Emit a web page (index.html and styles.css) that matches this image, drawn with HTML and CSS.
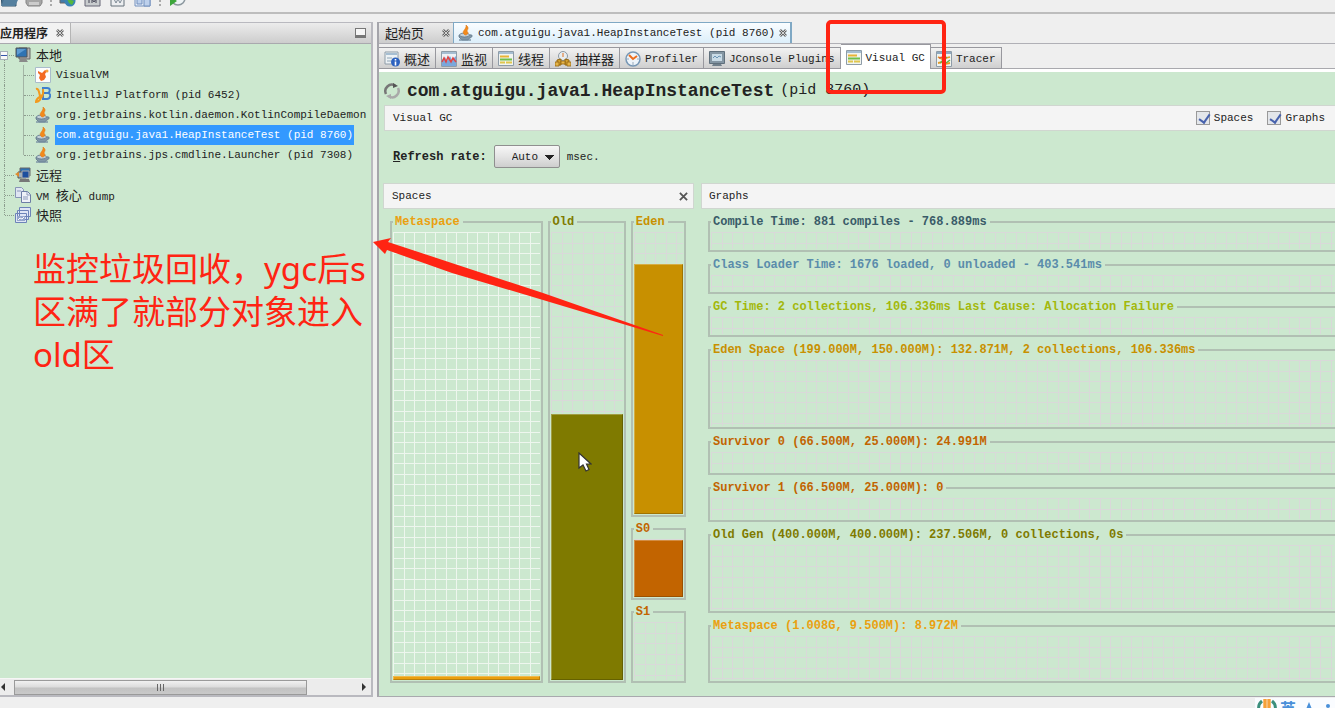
FILE: index.html
```html
<!DOCTYPE html>
<html lang="zh-CN">
<head>
<meta charset="utf-8">
<title>VisualVM</title>
<link rel="stylesheet" href="styles.css">
</head>
<body>
<svg class="sprite" aria-hidden="true">
  <symbol id="i-java" viewBox="0 0 16 16">
    <path d="M1 10h10.500c3-1 4 2 0 3.200L10 15H4l-3-3z" fill="#8298a8" stroke="#536c80" stroke-width=".7"/>
    <ellipse cx="6.500" cy="10" rx="5" ry="2" fill="#c3d0d9" stroke="#536c80" stroke-width=".7"/>
    <path d="M7 10C2 6 9 5 8 0c5 4-1 5 2 7.500C10 9 9 10 7 10z" fill="#f28a1c" stroke="#e07a18" stroke-width=".6"/>
    <path d="M1 15h12" stroke="#7890a2" stroke-width="1.400"/>
  </symbol>
  <symbol id="i-pc" viewBox="0 0 16 16">
    <path d="M4 1h11v11H4z" fill="#b4b4b4" stroke="#666"/>
    <path d="M1 1h11v9H1z" fill="#2f73b3" stroke="#555"/>
    <path d="M2 2h9L2 8z" fill="#5d9bd2"/>
    <path d="M5 12h6l2 3H4z" fill="#8a8a8a"/>
  </symbol>
  <symbol id="i-vvm" viewBox="0 0 16 16">
    <path d="M.5.5h15v15H.5z" fill="#fdfdfd" stroke="#a9bccb"/>
    <path d="M3 4l4 2 3-3 2 1-2 3 1 3-2 3-3 1-2-3 1-3-2-2z" fill="#f36a22"/>
    <circle cx="12" cy="4" r="1.500" fill="#f7a23b"/>
  </symbol>
  <symbol id="i-idea" viewBox="0 0 16 16">
    <path d="M8 1h4c4 0 3 4 1 5 4 1 2 6-1 6H8V1zM8 6h5" fill="none" stroke="#3f7fd0" stroke-width="2"/>
    <path d="M1 2c3-1 3 4 4 7 1 4 4-1 3-7M7 8c-1 4-3 7-6 7 0-4 4-5 6-7" fill="none" stroke="#f39a1d" stroke-width="2"/>
  </symbol>
  <symbol id="i-remote" viewBox="0 0 16 16">
    <path d="M5 1h10v8H5z" fill="#2f73b3" stroke="#666"/>
    <path d="M3 5h8v6H3z" fill="#9fb1bd" stroke="#555"/>
    <path d="M7 4h7v7H7z" fill="#1c4f9e" stroke="#aaa"/>
    <path d="M5 12h9l1 3H4z" fill="#777"/>
    <path d="M0 7l4-2v5z" fill="#e28a2b"/>
  </symbol>
  <symbol id="i-dump" viewBox="0 0 16 16">
    <path d="M.5.5h6l2 2v8h-8z" fill="#dfe5f2" stroke="#8795b6"/>
    <path d="M6.500 4.500h6l3 3v8h-9z" fill="#eef1f8" stroke="#6d7ea5"/>
    <path d="M12 5v3h3M8 10h5M8 12h5M2 4h4" fill="none" stroke="#8d9abb"/>
  </symbol>
  <symbol id="i-snap" viewBox="0 0 16 16">
    <path d="M4.500.5h11v9h-11zM2.500 3.500h11v9h-11zM.5 6.500h11v9H.5z" fill="#dfe6f5" stroke="#6c83b8"/>
    <path d="M2 9h8v5H2z" fill="#94a6cd"/>
    <path d="M3 13l2-2 2 1 2-2" fill="none" stroke="#fff"/>
  </symbol>
  <symbol id="i-info" viewBox="0 0 16 16">
    <path d="M1 1h13v12H1z" fill="#edf2f5" stroke="#8e9ca8"/>
    <path d="M2 2h11v2H2z" fill="#a6bed2"/>
    <path d="M3 7h5M3 10h4" stroke="#8fa4b5"/>
    <circle cx="11.500" cy="11" r="4.500" fill="#2d62bf"/>
    <path d="M11.500 8v1.500M11.500 10.500v4" stroke="#fff" stroke-width="1.600"/>
  </symbol>
  <symbol id="i-mon" viewBox="0 0 16 16">
    <path d="M.5.5h15v15H.5z" fill="#eef2f6" stroke="#8e9ca8"/>
    <path d="M1 1h14v2H1z" fill="#a6bed2"/>
    <path d="M1 15V9l3-3 2 4 3-5 2 4 4-4v10z" fill="#7aa7dc"/>
    <path d="M1 11l2-4 2 4 2-5 3 5 2-4 3 4" fill="none" stroke="#e14545" stroke-width="1.500"/>
  </symbol>
  <symbol id="i-thr" viewBox="0 0 16 16">
    <path d="M.5.5h15v14H.5z" fill="#f1f4f0" stroke="#8e9ca8"/>
    <path d="M1 1h14v2H1z" fill="#a6bed2"/>
    <path d="M2 5.500h9" stroke="#e8b435" stroke-width="2"/>
    <path d="M2 8.500h12" stroke="#6fbf4b" stroke-width="2"/>
    <path d="M2 11.500h5m1 0h6" stroke="#e0c64c" stroke-width="2"/>
  </symbol>
  <symbol id="i-samp" viewBox="0 0 16 16">
    <circle cx="8" cy="5" r="4.500" fill="#e8edf0" stroke="#8c98a2"/>
    <path d="M8 2v4" stroke="#e07020"/>
    <path d="M2 14V9l4-1v6zM10 14V8l4 1v5z" fill="#d2a02f" stroke="#94660f"/>
    <path d="M0 11h4v4H0zM12 11h4v4h-4zM6 10h4v3H6z" fill="#e5b54a" stroke="#94660f" stroke-width=".8"/>
  </symbol>
  <symbol id="i-prof" viewBox="0 0 16 16">
    <circle cx="8" cy="8" r="7" fill="#edf4fa" stroke="#7797b5" stroke-width="1.500"/>
    <path d="M4 4l4 4 4-3" fill="none" stroke="#ed6d1d" stroke-width="2"/>
    <path d="M8 11v3M2 8h2M12 8h2" stroke="#9ab"/>
  </symbol>
  <symbol id="i-jcon" viewBox="0 0 16 16">
    <path d="M.5.5h15v12H.5z" fill="#8496a3" stroke="#60707c"/>
    <path d="M3 3h10v7H3z" fill="#c9dbe6"/>
    <path d="M4 7l2-2 2 2 2-2 2 1" fill="none" stroke="#6b95b5"/>
    <path d="M4 13h8l1 2H3z" fill="#71808b"/>
  </symbol>
  <symbol id="i-trace" viewBox="0 0 16 16">
    <path d="M.5.5h15v15H.5z" fill="#f1f4f0" stroke="#8e9ca8"/>
    <path d="M1 1h14v2H1z" fill="#8fa9c0"/>
    <path d="M2 6l4 2 3 5 5-1M2 12l5-1 3-4 4-1" fill="none" stroke="#e79a2b" stroke-width="1.800"/>
    <path d="M4 12l7-6M10 12l4-3" stroke="#62b04a" stroke-width="1.500"/>
    <path d="M3 7l4-1" stroke="#d85a3a" stroke-width="1.500"/>
  </symbol>
  <symbol id="i-x" viewBox="0 0 8 8">
    <path d="M1 1l6 6M7 1L1 7" stroke="#666" stroke-width="2.600"/>
    <path d="M1 1l6 6M7 1L1 7" stroke="#eee" stroke-width=".8"/>
  </symbol>
</svg>

<header class="toolbar">
  <button aria-label="打开"><svg viewBox="0 0 18 16"><path d="M1 4h6l2 2h7v9H2z" fill="#4a7291" stroke="#34566f"/><path d="M4 9h14l-3 6H1z" fill="#55809f"/></svg></button>
  <button aria-label="保存" class="gap-m"><svg viewBox="0 0 18 16"><path d="M1 6h16v6l-2 3H3l-2-3z" fill="#a6a6a6" stroke="#858585"/><path d="M4 11h10v3H4z" fill="#ccc"/></svg></button>
  <i class="dots"></i>
  <button aria-label="远程"><svg viewBox="0 0 18 16"><path d="M1 4h9v8H1z" fill="#447ba8" stroke="#666"/><circle cx="11" cy="10" r="5.500" fill="#3984b5"/><path d="M8 8l3-2 1 3 3 1-2 4-3-2z" fill="#55b83d"/></svg></button>
  <button aria-label="JMX" class="gap-m"><svg viewBox="0 0 18 16"><path d="M1 4h15v11H1z" fill="#c8ccce" stroke="#667"/><path d="M3 8h2v4m3 0V8l2 3 2-3v4" fill="none" stroke="#445"/></svg></button>
  <button aria-label="堆" class="gap-m"><svg viewBox="0 0 18 16"><path d="M2 2h13v13H2z" fill="#eceef0" stroke="#67727d"/><path d="M5 8l2 4 2-4 2 4 2-4" fill="none" stroke="#7d8995"/></svg></button>
  <button aria-label="快照" class="gap-m"><svg viewBox="0 0 18 16"><path d="M1 1h15v14H1z" fill="#e6edf8" stroke="#7390bd"/><path d="M3 8h5v5H3zM10 8h6v7h-6z" fill="#bdd0ec" stroke="#7390bd"/></svg></button>
  <i class="dots"></i>
  <button aria-label="性能"><svg viewBox="0 0 18 16"><circle cx="10" cy="7" r="7" fill="#eef3f5" stroke="#8b979e" stroke-width="1.500"/><path d="M2 5l7 5-7 5z" fill="#3da63b"/><path d="M9 9l4-4" stroke="#777"/></svg></button>
</header>

<main class="work">
  <aside class="side">
    <div class="side-tabs">
      <h2>应用程序</h2>
      <button class="x" aria-label="关闭"><svg><use href="#i-x"/></svg></button>
      <button class="mini" aria-label="最小化"></button>
    </div>
    <ul class="tree">
      <li class="l1 first"><button class="twist" aria-label="折叠"></button><svg class="ic"><use href="#i-pc"/></svg><span class="zh">本地</span></li>
      <li class="l2"><svg class="ic"><use href="#i-vvm"/></svg><span>VisualVM</span></li>
      <li class="l2"><svg class="ic"><use href="#i-idea"/></svg><span>IntelliJ Platform (pid 6452)</span></li>
      <li class="l2"><svg class="ic"><use href="#i-java"/></svg><span>org.jetbrains.kotlin.daemon.KotlinCompileDaemon (p</span></li>
      <li class="l2"><svg class="ic"><use href="#i-java"/></svg><span class="sel">com.atguigu.java1.HeapInstanceTest (pid 8760)</span></li>
      <li class="l2 end"><svg class="ic"><use href="#i-java"/></svg><span>org.jetbrains.jps.cmdline.Launcher (pid 7308)</span></li>
      <li class="l1"><svg class="ic"><use href="#i-remote"/></svg><span class="zh">远程</span></li>
      <li class="l1"><svg class="ic"><use href="#i-dump"/></svg><span>VM <b class="zh">核心</b> dump</span></li>
      <li class="l1 last"><svg class="ic"><use href="#i-snap"/></svg><span class="zh">快照</span></li>
    </ul>
    <div class="hbar">
      <button aria-label="向左"><svg viewBox="0 0 6 8"><path d="M5 0v8L1 4z" fill="#333"/></svg></button>
      <div class="track"><div class="thumb"><i></i><i></i><i></i></div></div>
      <button aria-label="向右"><svg viewBox="0 0 6 8"><path d="M1 0v8l4-4z" fill="#333"/></svg></button>
    </div>
  </aside>

  <section class="doc">
    <nav class="doc-tabs">
      <div class="dt home"><a href="#home" class="zh">起始页</a><button class="x" aria-label="关闭"><svg><use href="#i-x"/></svg></button></div>
      <div class="dt on"><svg class="ic"><use href="#i-java"/></svg><a href="#app">com.atguigu.java1.HeapInstanceTest (pid 8760)</a><button class="x" aria-label="关闭"><svg><use href="#i-x"/></svg></button></div>
    </nav>
    <nav class="views">
      <a href="#v1"><svg class="ic"><use href="#i-info"/></svg><span class="zh">概述</span></a>
      <a href="#v2"><svg class="ic"><use href="#i-mon"/></svg><span class="zh">监视</span></a>
      <a href="#v3"><svg class="ic"><use href="#i-thr"/></svg><span class="zh">线程</span></a>
      <a href="#v4"><svg class="ic"><use href="#i-samp"/></svg><span class="zh">抽样器</span></a>
      <a href="#v5"><svg class="ic"><use href="#i-prof"/></svg><span>Profiler</span></a>
      <a href="#v6"><svg class="ic"><use href="#i-jcon"/></svg><span>JConsole Plugins</span></a>
      <a href="#v7" class="cur"><svg class="ic"><use href="#i-thr"/></svg><span>Visual GC</span></a>
      <a href="#v8"><svg class="ic"><use href="#i-trace"/></svg><span>Tracer</span></a>
    </nav>
    <div class="page">
      <h1><svg viewBox="0 0 16 16"><path d="M2 11a6.500 6.500 0 0 1 9-8.500" fill="none" stroke="#777" stroke-width="2.500"/><path d="M14 5a6.500 6.500 0 0 1-9 8.500" fill="none" stroke="#a9a9a9" stroke-width="2.500"/><path d="M9 0l5 3-5 2z" fill="#555"/><path d="M7 16l-5-3 5-2z" fill="#a9a9a9"/></svg><span>com.atguigu.java1.HeapInstanceTest</span> <small>(pid 8760)</small></h1>
      <div class="bar main-bar">
        <span>Visual GC</span>
        <label class="push"><input type="checkbox" checked>Spaces</label>
        <label><input type="checkbox" checked>Graphs</label>
      </div>
      <div class="rate">
        <label for="rate"><u>R</u>efresh rate:</label>
        <select id="rate"><option>Auto</option></select>
        <span>msec.</span>
      </div>
      <div class="panels">
        <section class="panel spaces">
          <div class="bar"><span>Spaces</span><button class="close" aria-label="关闭"><svg viewBox="0 0 10 10"><path d="M1 1l8 8M9 1L1 9" stroke="#555" stroke-width="2"/></svg></button></div>
          <div class="heap">
            <fieldset class="c-meta bright"><legend>Metaspace</legend><div class="grid"><div class="fill" style="height:1%"></div></div></fieldset>
            <fieldset class="c-old"><legend>Old</legend><div class="grid"><div class="fill" style="height:59.4%"></div></div></fieldset>
            <div class="young">
              <fieldset class="c-eden"><legend>Eden</legend><div class="grid"><div class="fill" style="height:88.5%"></div></div></fieldset>
              <fieldset class="c-surv"><legend>S0</legend><div class="grid"><div class="fill" style="height:99%"></div></div></fieldset>
              <fieldset class="c-surv"><legend>S1</legend><div class="grid"></div></fieldset>
            </div>
          </div>
        </section>
        <section class="panel graphs">
          <div class="bar"><span>Graphs</span></div>
          <div class="charts">
            <fieldset class="c-comp"><legend>Compile Time: 881 compiles - 768.889ms</legend><div class="grid"></div></fieldset>
            <fieldset class="c-load"><legend>Class Loader Time: 1676 loaded, 0 unloaded - 403.541ms</legend><div class="grid"></div></fieldset>
            <fieldset class="c-gc"><legend>GC Time: 2 collections, 106.336ms Last Cause: Allocation Failure</legend><div class="grid"></div></fieldset>
            <fieldset class="c-eden"><legend>Eden Space (199.000M, 150.000M): 132.871M, 2 collections, 106.336ms</legend><div class="grid"></div></fieldset>
            <fieldset class="c-surv"><legend>Survivor 0 (66.500M, 25.000M): 24.991M</legend><div class="grid"></div></fieldset>
            <fieldset class="c-surv"><legend>Survivor 1 (66.500M, 25.000M): 0</legend><div class="grid"></div></fieldset>
            <fieldset class="c-old"><legend>Old Gen (400.000M, 400.000M): 237.506M, 0 collections, 0s</legend><div class="grid"></div></fieldset>
            <fieldset class="c-meta"><legend>Metaspace (1.008G, 9.500M): 8.972M</legend><div class="grid"></div></fieldset>
          </div>
        </section>
      </div>
    </div>
  </section>
</main>

<div class="ime">
  <svg viewBox="0 0 20 18"><path d="M5 3C0 7 1 13 5 17M15 3c5 4 4 10 0 14" fill="none" stroke="#3c8f7c" stroke-width="3"/><path d="M8 1v16M12 1v16" stroke="#f5a13a" stroke-width="3.400"/></svg>
  <span>英</span>
  <svg viewBox="0 0 20 18"><path d="M10 4l5 12H5z" fill="#4a90d9"/></svg>
  <svg viewBox="0 0 20 18"><circle cx="6" cy="8" r="2" fill="#4a90d9"/></svg>
</div>

<svg class="cursor" viewBox="0 0 14 21"><path d="M1 1v15l4-3 3 6 3-1.500L8.500 12H13z" fill="#fff" stroke="#333" stroke-width="1.200"/></svg>
<p class="note">监控垃圾回收，ygc后s<br>区满了就部分对象进入<br>old区</p>
<div class="mark"></div>
<svg class="arrow" viewBox="0 0 292 102"><path d="M1 7L19 3l-3 4 155 51 120 42v1L171 65 80 38 15 15l-2 4z" fill="#ff2413"/></svg>
</body>
</html>
```

FILE: styles.css
```css
* { box-sizing: border-box; }
body {
  margin: 0;
  min-height: 100vh;
  display: flex;
  flex-direction: column;
  position: relative;
  overflow: hidden;
  padding-bottom: 11px;
  background: #efefef;
  color: #222;
  font: 11px/14px "Liberation Mono", "Noto Sans CJK SC", monospace;
}
a { color: inherit; text-decoration: none; }
button { border: 0; padding: 0; background: none; display: block; }
svg { display: block; flex: none; }
.sprite { position: absolute; width: 0; height: 0; }
.ic { width: 16px; height: 16px; }
.zh { font: 13px/16px "Noto Sans CJK SC", sans-serif; }
.x { width: 8px; height: 8px; flex: none; }
.x svg { width: 8px; height: 8px; }

.toolbar {
  height: 14px;
  flex: none;
  display: flex;
  align-items: flex-end;
  overflow: hidden;
  padding-bottom: 5px;
  border-bottom: 2px solid #bdbdbd;
}
.toolbar svg { width: 18px; height: 16px; }
.gap-m { margin-left: 7px; }
.dots { width: 2px; height: 7px; margin: 0 7px; background: repeating-linear-gradient(#aaa 0 2px, transparent 2px 4px); }

.work { flex: 1; display: flex; margin-top: 8px; }

.side {
  width: 373px;
  flex: none;
  display: flex;
  flex-direction: column;
  border: 2px solid #b9b9bf;
  border-width: 1px 2px 2px 0;
  background: #cce8cf;
}
.side-tabs {
  height: 21px;
  display: flex;
  align-items: center;
  background: linear-gradient(#ececec, #cdcdcd);
  border-bottom: 1px solid #a9a9ae;
}
.side-tabs h2 {
  margin: 0;
  height: 20px;
  font: bold 12px/20px "Noto Sans CJK SC", sans-serif;
  background: #f2f2f2;
  padding-right: 8px;
}
.side-tabs .x { box-sizing: content-box; padding: 6px 6px 6px 0; background: #f2f2f2; border-right: 1px solid #b5b5b5; }
.mini { margin-left: auto; margin-right: 5px; width: 11px; height: 10px; border: 1px solid #777; border-bottom-width: 3px; background: #f6f6f6; }

.tree { flex: 1; margin: 0; padding: 1px 0 0; list-style: none; overflow: hidden; }
.tree li { height: 20px; display: flex; align-items: center; gap: 4px; white-space: nowrap; position: relative; }
.tree .l1 { padding-left: 15px; }
.tree .l2 { padding-left: 35px; }
.tree span { padding: 3px 1px; }
.tree b { font-weight: normal; }
.tree .sel { background: #3399ff; color: #fff; }
.tree li::before { content: ""; position: absolute; left: 4px; top: 0; height: 20px; border-left: 1px dotted #8c9c8e; }
.tree li.first::before { top: 10px; height: 10px; }
.tree li.last::before { height: 10px; }
.tree li.l2 { background: linear-gradient(90deg, transparent 23px, #a3b5a5 23px 24px, transparent 24px); }
.tree li.end { background-size: 100% 10px; background-repeat: no-repeat; }
.tree li::after { content: ""; position: absolute; top: 10px; left: 5px; width: 9px; border-top: 1px dotted #8c9c8e; }
.tree .l2::after { left: 24px; width: 10px; }
.twist { position: absolute; z-index: 1; left: 0; top: 6px; width: 8px; height: 9px; border: 1px solid #a6b1b9; background: linear-gradient(#f8f8f8 3px, #3355aa 3px 4px, #f8f8f8 4px); }

.hbar { height: 17px; display: flex; align-items: center; background: #ececec; border-top: 1px solid #f6f6f6; }
.hbar button { width: 14px; display: flex; justify-content: center; }
.hbar button:first-child { width: 6px; margin-right: 8px; }
.hbar button svg { width: 6px; height: 8px; }
.track { flex: 1; margin-right: 2px; }
.thumb {
  width: 86%;
  height: 15px;
  display: flex;
  justify-content: center;
  align-items: center;
  gap: 2px;
  border: 1px solid #9a9a9a;
  background: linear-gradient(#f1f1f1, #dcdcdc 45%, #c2c2c2 55%, #c9c9c9);
}
.thumb i { width: 1px; height: 7px; background: #666; }

.doc {
  flex: 1;
  min-width: 0;
  margin-left: 4px;
  display: flex;
  flex-direction: column;
  border-left: 2px solid #a5a5ab;
  border-bottom: 1px solid #a9a9ae;
}
.doc-tabs { height: 22px; display: flex; border-bottom: 1px solid #b0b0b6; }
.dt { display: flex; align-items: center; border: 1px solid #a9a9ae; border-width: 1px 0 0; white-space: nowrap; }
.home { width: 74px; padding: 0 3px 0 6px; justify-content: space-between; background: linear-gradient(#ececec, #cdcdcd); }
.dt.on { width: 339px; padding: 0 4px; gap: 4px; border: 1px solid #7fa8c4; border-width: 1px 2px 0 1px; background: linear-gradient(#fafdff, #dceefa); }
.dt.on .x { margin-left: auto; }

.views { height: 28px; display: flex; align-items: flex-end; border-bottom: 3px solid #fff; background: linear-gradient(#efefef 24px, #a9a9ae 24px); }
.views a {
  height: 22px;
  padding: 2px 5px 0;
  display: flex;
  align-items: center;
  gap: 4px;
  white-space: nowrap;
  border: 1px solid #98989e;
  border-width: 1px 1px 1px 0;
  background: linear-gradient(#f2f2f2, #cfcfcf);
}
.views .cur { height: 25px; background: #fff; border-bottom: 0; }

.page { flex: 1; display: flex; flex-direction: column; background: #cce8cf; }
h1 { height: 33px; margin: 0; padding: 4px 0 0 5px; display: flex; align-items: center; font-size: 18px; line-height: 24px; white-space: nowrap; }
h1 svg { width: 16px; height: 16px; margin-right: 7px; }
h1 small { font-size: 15px; font-weight: normal; margin-left: 6px; }
.bar { height: 26px; padding: 0 5px 0 8px; display: flex; align-items: center; background: #f4f4f4; border: 1px solid #d0d6d0; }
.bar span { flex: none; }
.main-bar { margin-left: 5px; padding-right: 10px; border-right: 0; }
.push { margin-left: auto; }
.bar label { display: flex; align-items: center; }
.bar label + label { margin-left: 14px; }
input { appearance: none; width: 14px; height: 14px; margin: 0 4px 0 0; border: 1px solid #999; background: #e3e6ea; position: relative; }
input:checked::after { content: ""; position: absolute; left: 4px; top: 0; width: 5px; height: 9px; border: solid #4762ad; border-width: 0 2px 2px 0; transform: rotate(35deg); }
.rate { height: 52px; padding: 0 0 11px 14px; margin-top: 5px; margin-bottom: -5px; display: flex; align-items: center; gap: 7px; }
.rate label { font-size: 12px; font-weight: bold; }
select {
  appearance: none;
  width: 66px;
  height: 23px;
  padding: 0 0 0 17px;
  border: 1px solid #8f8f8f;
  border-radius: 2px;
  font: inherit;
  color: #222;
  background:
    linear-gradient(#222, #222) 50px 9px / 9px 1px no-repeat,
    linear-gradient(#222, #222) 51px 10px / 7px 1px no-repeat,
    linear-gradient(#222, #222) 52px 11px / 5px 1px no-repeat,
    linear-gradient(#222, #222) 53px 12px / 3px 1px no-repeat,
    linear-gradient(#222, #222) 54px 13px / 1px 1px no-repeat,
    linear-gradient(#f7f7f7, #e4e4e4 50%, #cecece);
}

.panels { flex: 1; display: flex; gap: 7px; padding-left: 4px; }
.panel { display: flex; flex-direction: column; }
.spaces { width: 311px; flex: none; }
.graphs { flex: 1; min-width: 0; }
.graphs .bar { border-right: 0; padding-left: 7px; }
.close { margin-left: auto; }
.close svg { width: 9px; height: 9px; }
.heap { flex: 1; display: grid; grid-template-columns: 152fr 78fr 55fr; gap: 5px; padding: 6px 8px 13px 7px; }
.young { display: grid; grid-template-rows: 306fr 79fr 79fr; gap: 5px; }
.charts { flex: 1; display: grid; grid-template-rows: 37fr 37fr 37fr 86fr 41fr 41fr 86fr 64fr; gap: 6px; padding: 6px 0 13px 7px; }

fieldset { min-width: 0; min-height: 0; margin: 0; padding: 3px 1px 1px; border: 2px solid #b1c0b3; display: flex; }
.charts fieldset { border-right: 0; }
legend { padding: 0 3px 0 2px; font-size: 12px; line-height: 14px; font-weight: bold; white-space: nowrap; }
.grid {
  --line: #d9d9d9;
  flex: 1;
  display: flex;
  flex-direction: column;
  justify-content: flex-end;
  background:
    repeating-linear-gradient(90deg, var(--line) 0 1px, transparent 1px 11px, var(--line) 11px 12px, transparent 12px 21px),
    repeating-linear-gradient(var(--line) 0 1px, transparent 1px 11px, var(--line) 11px 12px, transparent 12px 21px);
}
.bright .grid { --line: #eef6ee; }
.fill { background: currentColor; border: 1px solid; border-color: #ffffff44 #00000033 #00000033 #ffffff44; min-height: 4px; }
.c-meta { color: #eaa010; }
.c-old { color: #7f7a00; }
.c-eden { color: #c89000; }
.c-surv { color: #c26400; }
.c-comp { color: #395b68; }
.c-load { color: #5a8cab; }
.c-gc { color: #a3b80c; }

.ime { position: absolute; right: 0; bottom: 0; width: 80px; height: 10px; overflow: hidden; display: flex; gap: 3px; padding-left: 2px; background: #fafcff; }
.ime svg { width: 20px; height: 18px; }
.ime span { color: #4a90d9; font: bold 16px/20px "Noto Sans CJK SC", sans-serif; }
.cursor { position: absolute; left: 578px; top: 452px; width: 14px; height: 21px; }
.note { position: absolute; left: 33px; top: 247px; margin: 0; color: #ff2413; font: 33px/43px "Noto Sans", "Noto Sans CJK SC", sans-serif; white-space: nowrap; }
.mark { position: absolute; left: 826px; top: 20px; width: 120px; height: 74px; border: 4px solid #ff2413; border-radius: 5px; }
.arrow { position: absolute; left: 372px; top: 235px; width: 292px; height: 102px; }
```
